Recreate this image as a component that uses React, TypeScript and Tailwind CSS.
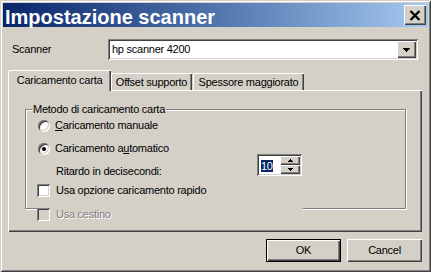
const raised =
  'bg-[#d4d0c8] shadow-[inset_1px_1px_0_#fff,inset_-1px_-1px_0_#404040,inset_-2px_-2px_0_#808080]'
const sunken =
  'shadow-[inset_1px_1px_0_#808080,inset_-1px_-1px_0_#fff,inset_2px_2px_0_#404040,inset_-2px_-2px_0_#d4d0c8]'

function Radio({ checked }: { checked?: boolean }) {
  return (
    <div className={`flex h-[12px] w-[12px] items-center justify-center rounded-full bg-white ${sunken}`}>
      {checked && <div className="h-[4px] w-[4px] rounded-full bg-black" />}
    </div>
  )
}

function Check({ disabled }: { disabled?: boolean }) {
  return <div className={`h-[13px] w-[13px] ${disabled ? 'bg-[#d4d0c8]' : 'bg-white'} ${sunken}`} />
}

function Arrow({ up }: { up?: boolean }) {
  return (
    <svg width="5" height="3" viewBox="0 0 5 3" shapeRendering="crispEdges">
      <path d={up ? 'M2 0h1v1h1v1h1v1H0V2h1V1h1z' : 'M0 0h5v1H4v1H3v1H2V2H1V1H0z'} fill="#000" />
    </svg>
  )
}

export default function App() {
  return (
    <div className="h-[272px] w-[431px] bg-[#d4d0c8] p-[3px] font-['Liberation_Sans',Arial,sans-serif] text-[11px] tracking-[-0.25px] text-black shadow-[inset_1px_1px_0_#d4d0c8,inset_-1px_-1px_0_#404040,inset_2px_2px_0_#fff,inset_-2px_-2px_0_#808080]">
      {/* Title bar */}
      <div className="flex h-[24px] items-start justify-between bg-linear-to-r from-[#0a246a] to-[#a6caf0]">
        <div className="pl-[2px] pt-[4px] text-[20px] font-bold leading-[20px] tracking-normal text-white">
          Impostazione scanner
        </div>
        <div className={`mr-[2px] mt-[2px] flex h-[20px] w-[22px] items-center justify-center ${raised}`}>
          <svg width="12" height="11" viewBox="0 0 12 11">
            <path d="M1.5 1 L10.5 10 M10.5 1 L1.5 10" stroke="#000" strokeWidth="2.2" />
          </svg>
        </div>
      </div>

      {/* Scanner combo */}
      <div className="mt-[12px] flex h-[21px] items-center">
        <div className="w-[105px] pl-[9px]">Scanner</div>
        <div className={`flex h-[21px] w-[310px] items-center bg-white p-[2px] ${sunken}`}>
          <div className="flex-1 pl-[2px]">hp scanner 4200</div>
          <div className={`flex h-[17px] w-[19px] items-center justify-center ${raised}`}>
            <svg width="7" height="4" viewBox="0 0 7 4" shapeRendering="crispEdges">
              <path d="M0 0h7v1H6v1H5v1H4v1H3V3H2V2H1V1H0z" fill="#000" />
            </svg>
          </div>
        </div>
      </div>

      {/* Tabs */}
      <div className="mt-[10px] flex h-[20px] items-end pl-[5px]">
        <div className="relative z-10 -mb-px flex h-[21px] w-[103px] items-center justify-center rounded-tl-[2px] bg-[#d4d0c8] shadow-[inset_1px_1px_0_#fff,inset_-1px_0_0_#404040,inset_-2px_0_0_#808080]">
          Caricamento carta
        </div>
        <div className="flex h-[17px] w-[81px] items-center justify-center pt-[1px] shadow-[inset_1px_1px_0_#fff,inset_-1px_0_0_#404040,inset_-2px_0_0_#808080]">
          Offset supporto
        </div>
        <div className="ml-[1px] flex h-[17px] w-[111px] items-center justify-center pt-[1px] shadow-[inset_1px_1px_0_#fff,inset_-1px_0_0_#404040,inset_-2px_0_0_#808080]">
          Spessore maggiorato
        </div>
      </div>

      {/* Tab panel */}
      <div className={`ml-[5px] mr-[6px] h-[142px] pl-[17px] pt-[19px] ${raised}`}>
        <div className="relative h-[100px] w-[381px] border border-[#808080] pt-[4px] shadow-[1px_1px_0_#fff,inset_1px_1px_0_#fff]">
          <div className="absolute -top-[8px] left-[6px] bg-[#d4d0c8] px-[1px] leading-[14px]">
            Metodo di caricamento carta
          </div>
          <div className="flex h-[23px] items-center pl-[12px]">
            <Radio />
            <span className="ml-[5px]">
              <span className="underline">C</span>aricamento manuale
            </span>
          </div>
          <div className="flex h-[23px] items-center pl-[12px]">
            <Radio checked />
            <span className="ml-[5px]">
              Caricamento a<span className="underline">u</span>tomatico
            </span>
          </div>
          <div className="flex h-[23px] items-start pl-[30px]">
            <span className="w-[201px] leading-[23px]">Ritardo in decisecondi:</span>
            <div className={`-mt-[6px] flex h-[22px] w-[45px] p-[2px] ${sunken}`}>
              <div className="flex-1 bg-white pl-[2px] pt-[2px]">
                <span className="bg-[#0a246a] leading-[14px] text-white">10</span>
              </div>
              <div className="flex w-[20px] flex-col">
                <div className={`flex h-[9px] items-center justify-center ${raised}`}>
                  <Arrow up />
                </div>
                <div className={`flex h-[9px] items-center justify-center ${raised}`}>
                  <Arrow />
                </div>
              </div>
            </div>
          </div>
          <div className="flex h-[14px] items-center pl-[11px]">
            <Check />
            <span className="ml-[6px]">Usa opzione caricamento rapido</span>
          </div>
        </div>
        <div className="relative z-10 -mt-[2px] ml-[12px] flex h-[14px] w-[266px] items-center bg-[#d4d0c8]">
          <Check disabled />
          <span className="ml-[6px] text-[#808080] [text-shadow:1px_1px_0_#fff]">Usa cestino</span>
        </div>
      </div>

      {/* Buttons */}
      <div className="mt-[7px] flex justify-end gap-[6px] pr-[6px]">
        <div className="flex h-[23px] w-[75px] items-center justify-center border border-black bg-[#d4d0c8] shadow-[inset_1px_1px_0_#fff,inset_-1px_-1px_0_#404040,inset_-2px_-2px_0_#808080]">
          OK
        </div>
        <div className={`flex h-[23px] w-[75px] items-center justify-center ${raised}`}>Cancel</div>
      </div>
    </div>
  )
}
